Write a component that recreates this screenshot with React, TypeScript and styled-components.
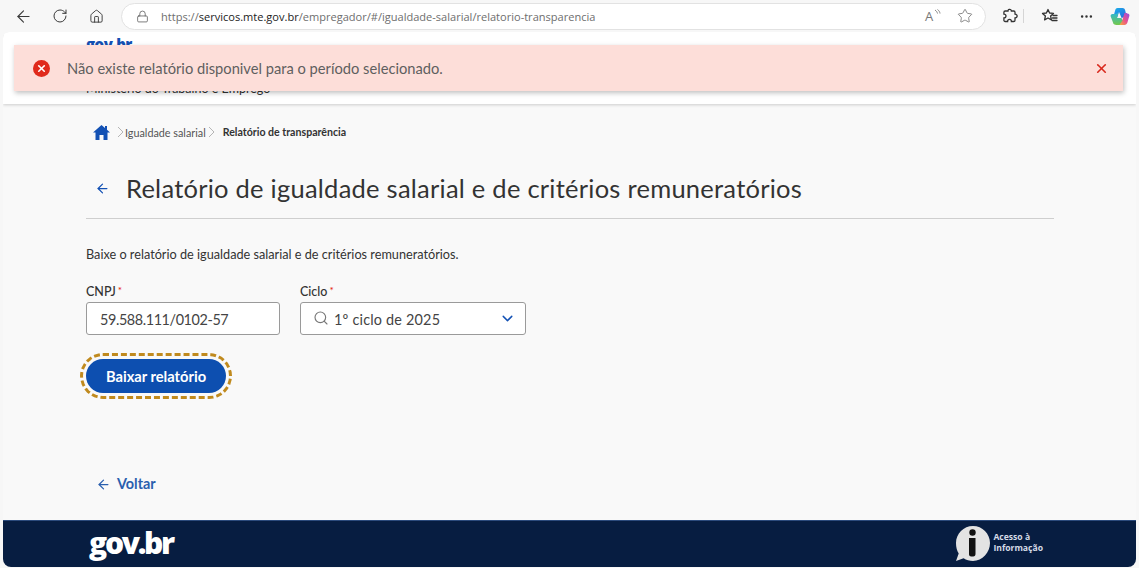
import React from "react";
import styled, { createGlobalStyle } from "styled-components";
import { ArrowLeft, RotateCw, House, Lock, Star, MoreHorizontal, Search, ChevronDown, X } from "lucide-react";

const Global = createGlobalStyle`
  html, body { margin: 0; padding: 0; width: 1139px; height: 568px; overflow: hidden; background: #f7f7f7; }
  * { box-sizing: border-box; }
  body { font-family: "Lato", "Liberation Sans", sans-serif; color: #333; }
`;

const Shell = styled.div`
  width: 1139px; height: 568px; display: flex; flex-direction: column; position: relative; overflow: hidden;
`;
const Toolbar = styled.div`
  height: 32px; flex: none; display: flex; align-items: center; padding: 0 0 0 14px; background: #f7f7f7;
`;
const NavBtn = styled.span<{ $w: number }>`
  width: ${p => p.$w}px; flex: none; display: flex; align-items: center; color: #3a3a3a;
`;
const Address = styled.div`
  width: 865px; height: 27px; margin-left: 1px; flex: none; display: flex; align-items: center; background: #fff;
  border: 1px solid #e2e2e2; border-radius: 14px; padding: 0 12px 0 14px; color: #555;
`;
const Url = styled.span`
  margin-left: 12px; font: 11.05px "Open Sans", sans-serif; color: #6e6e6e; flex: 1; white-space: nowrap;
  b { font-weight: 500; color: #222; }
`;
const AddrIcons = styled.span`
  display: flex; align-items: center; gap: 17px; color: #777;
`;
const ReadAloud = styled.span`
  position: relative; width: 15px; height: 15px; display: block; font: 13px/15px "Open Sans", sans-serif; color: #777;
  svg { position: absolute; right: -1px; top: 0; }
`;
const ToolIcons = styled.div`
  display: flex; align-items: center; margin-left: 16px; color: #333;
`;
const ToolSlot = styled.span<{ $w: number }>`
  width: ${p => p.$w}px; flex: none; display: flex; align-items: center;
`;
const Divider = styled.span`
  width: 1px; height: 14px; background: #d5d5d5; margin-right: 17px;
`;

const Page = styled.div`
  flex: 1; margin: 0 3px 1px; display: flex; flex-direction: column; background: #f9f9f9; min-height: 0;
  border-radius: 6px 6px 8px 8px; overflow: hidden;
`;
const Header = styled.header`
  height: 72px; flex: none; background: #fff; box-shadow: 0 1px 3px rgba(0,0,0,.18); padding: 6px 0 8px 83px;
  display: flex; flex-direction: column; justify-content: space-between;
`;
const HeaderLogo = styled.span`
  font: 800 15px "Open Sans", sans-serif; letter-spacing: -.5px; color: #1351b4; line-height: 12px;
`;
const HeaderOrg = styled.span`
  font: 12.5px "Lato", sans-serif; color: #333; line-height: 14px;
`;
const Toast = styled.div`
  position: absolute; left: 14px; top: 45px; width: 1109px; height: 46px; background: #fdded9;
  box-shadow: 1px 2px 5px rgba(0,0,0,.25); display: flex; align-items: center; padding: 0 14px 0 19px;
`;
const ToastIcon = styled.span`
  width: 17px; height: 17px; border-radius: 50%; background: #e02a1c; color: #fff; display: flex;
  align-items: center; justify-content: center; flex: none;
`;
const ToastText = styled.span`
  margin-left: 17px; font: 14.7px "Lato", sans-serif; color: #5f5f5f; flex: 1;
`;
const ToastClose = styled.span`
  color: #d9281c; display: flex;
`;

const Main = styled.main`
  flex: 1; padding: 21px 82px 0 83px; display: flex; flex-direction: column; min-height: 0;
`;
const Crumbs = styled.nav`
  display: flex; align-items: center; height: 14px; margin-left: 7px; font: 10.8px "Lato", sans-serif; color: #555;
`;
const Sep = styled.span<{ $ml: number }>`
  display: flex; color: #b5b5b5; margin: 0 1px 0 ${p => p.$ml}px;
`;
const Current = styled.span`
  font-weight: 700; color: #333; margin-left: 7px; font-size: 10.6px;
`;
const TitleRow = styled.div`
  margin-top: 27px; height: 44px; padding-left: 9px; display: flex; align-items: center; color: #1351b4;
`;
const Title = styled.h1`
  margin: 0 0 0 16px; font: 400 25.5px "Lato", sans-serif; letter-spacing: .25px; color: #333; white-space: nowrap;
`;
const Rule = styled.hr`
  margin: 8px 0 0; border: 0; height: 1px; background: #cfcfcf;
`;
const Lead = styled.p`
  margin: 27px 0 0; font: 12.7px/16px "Lato", sans-serif; color: #333;
`;
const Fields = styled.div`
  display: flex; gap: 20px; margin-top: 20px;
`;
const Field = styled.div<{ $w: number }>`
  width: ${p => p.$w}px; display: flex; flex-direction: column; gap: 2px;
`;
const Label = styled.label`
  font: 500 12.5px/16px "Lato", sans-serif; color: #333;
  i { color: #e52207; font-style: normal; font-size: 10px; vertical-align: 2px; margin-left: 2px; }
`;
const Box = styled.div`
  height: 33px; background: #fff; border: 1px solid #9a9a9a; border-radius: 3px; display: flex; align-items: center;
  font: 14.4px "Lato", sans-serif; color: #444; padding: 2px 9px 0 13px;
`;
const BoxText = styled.span<{ $ml?: number; $ls?: number }>`
  flex: 1; margin-left: ${p => p.$ml ?? 0}px; letter-spacing: ${p => p.$ls ?? 0.2}px; white-space: nowrap;
`;
const SearchSlot = styled.span`
  color: #777; display: flex; margin: -3px 0 0 -1px;
`;
const ChevSlot = styled.span`
  color: #1351b4; display: flex; margin-top: -3px;
`;
const ButtonWrap = styled.div`
  margin-top: 24px; align-self: flex-start;
`;
const Button = styled.button`
  display: block; width: 140px; height: 34px; border: 0; border-radius: 17px; background: #0d4fb0; color: #fff;
  font: 700 14.7px "Lato", sans-serif; outline: 3px dashed #c08a1e; outline-offset: 3px; padding: 0;
`;
const Back = styled.a`
  margin-top: 83px; margin-left: 10px; display: flex; align-items: center; gap: 6px; color: #2a5fae;
  font: 700 14.4px/16px "Lato", sans-serif; align-self: flex-start;
`;
const Footer = styled.footer`
  height: 47px; flex: none; background: #071d41; border-top: 1px solid #2b4a7c; display: flex; align-items: center;
  justify-content: space-between; padding: 0 93px 0 86px; color: #fff;
`;
const FooterLogo = styled.span`
  font: 800 30px/40px "Open Sans", sans-serif; letter-spacing: -2.3px; color: #fff; margin-top: -3px;
`;
const Info = styled.div`
  display: flex; align-items: center; gap: 1px;
`;
const InfoText = styled.span`
  font: 700 8.6px/11px "Open Sans", sans-serif; color: #d5dbe6; margin-bottom: 2px;
`;

const Extension = () => (
  <svg width="16" height="16" viewBox="0 0 16 16" fill="none" stroke="#333" strokeWidth="1.3">
    <path d="M6 2.600C6.300 1.400 7.900 1 8.800 1.800c.5.4.6.9.6 1.200h2.300c.8 0 1.300.5 1.300 1.300v1.900c1.500 0 2.300 1.100 2.100 2.200-.2 1-1.100 1.600-2.100 1.600v2.200c0 .8-.5 1.300-1.300 1.300H9.400c0-1.500-1-2.100-1.900-2.100S5.600 12 5.600 13.500H3.200c-.8 0-1.300-.5-1.300-1.300V10c1.300 0 2.100-.9 2.100-1.900S3.200 6.200 1.900 6.200V4.300C1.900 3.500 2.400 3 3.200 3H6Z" />
  </svg>
);
const Favs = () => (
  <svg width="17" height="16" viewBox="0 0 17 16" fill="none" stroke="#333" strokeWidth="1.3" strokeLinejoin="round">
    <path d="M7 1.500 8.600 5l3.900.4-2.900 2.600.8 3.900L7 10l-3.400 1.900.8-3.900L1.500 5.400 5.400 5Z" />
    <path d="M12 7.500h4M11.500 10h4.500M11 12.500h5" strokeLinecap="round" />
  </svg>
);
const Copilot = () => (
  <svg width="20" height="19" viewBox="0 0 20 19">
    <defs>
      <linearGradient id="cpA" x1="0" y1="0" x2="1" y2="1">
        <stop offset="0" stopColor="#19b4ea" />
        <stop offset="1" stopColor="#2b62de" />
      </linearGradient>
      <linearGradient id="cpB" x1="0" y1="1" x2="1" y2="0">
        <stop offset="0" stopColor="#f5b92c" />
        <stop offset=".5" stopColor="#ea4f8e" />
        <stop offset="1" stopColor="#8f4fe2" />
      </linearGradient>
      <linearGradient id="cpC" x1="0" y1="0" x2="0" y2="1">
        <stop offset="0" stopColor="#2bb5d8" />
        <stop offset="1" stopColor="#74c94a" />
      </linearGradient>
    </defs>
    <path d="M7.500 1h5c1.400 0 2.200.8 2.600 2l1.500 6.500-5 1.500L9 5 7 11H3l2.200-7.800C5.600 1.900 6.300 1 7.500 1Z" fill="url(#cpA)" />
    <path d="M17 6.500h.5c1.300 0 2.200 1 1.900 2.300l-2 6.700c-.5 1.600-1.400 2.500-3 2.500H8.500l4-5.500 2-6.500h2.500Z" fill="url(#cpB)" />
    <path d="M8.500 5.500 7 11h4.500l1 2.500L9.500 18h-3C4.500 18 3 17 3 15.500L.7 9.500C.3 8 1.200 7 2.500 7H6Z" fill="url(#cpC)" />
  </svg>
);
const InfoIcon = () => (
  <svg width="38" height="38" viewBox="0 0 38 38">
    <path d="M19 1C28.400 1 36 8.600 36 18s-7.600 18-17 18c-3.500 0-6.700-1-9.400-2.800L2 36l2.700-7.400C2.900 25.600 2 22 2 18 2 8.600 9.600 1 19 1Z" fill="#e3e3e3" />
    <circle cx="18.500" cy="7.500" r="3.200" fill="#111" />
    <path d="M15 13h6.500v15.500c0 1.500 0 3-3.300 3s-3.200-1.500-3.200-3Z" fill="#111" />
  </svg>
);
const Chevron = () => (
  <svg width="7" height="12" viewBox="0 0 7 12" fill="none" stroke="currentColor"><path d="m1 1 5 5-5 5" /></svg>
);

export default function App() {
  return (
    <Shell>
      <Global />
      <Toolbar>
        <NavBtn $w={38}><ArrowLeft size={19} strokeWidth={1.4} /></NavBtn>
        <NavBtn $w={37}><RotateCw size={16} strokeWidth={1.5} /></NavBtn>
        <NavBtn $w={31}><House size={15} strokeWidth={1.5} /></NavBtn>
        <Address>
          <Lock size={13} strokeWidth={1.4} />
          <Url>https://<b>servicos.mte.gov.br</b>/empregador/#/igualdade-salarial/relatorio-transparencia</Url>
          <AddrIcons>
            <ReadAloud>
              A
              <svg width="7" height="8" viewBox="0 0 7 8" fill="none" stroke="#777" strokeWidth="0.9">
                <path d="M1 1c1.500 1 2.200 2.200 2.500 3.500M3.500 0.500C5 1.500 5.800 3 6 4.500" />
              </svg>
            </ReadAloud>
            <Star size={16} strokeWidth={1.3} />
          </AddrIcons>
        </Address>
        <ToolIcons>
          <ToolSlot $w={21}><Extension /></ToolSlot>
          <Divider />
          <ToolSlot $w={38}><Favs /></ToolSlot>
          <ToolSlot $w={31}><MoreHorizontal size={15} strokeWidth={2} /></ToolSlot>
          <ToolSlot $w={20}><Copilot /></ToolSlot>
        </ToolIcons>
      </Toolbar>
      <Page>
        <Header>
          <HeaderLogo>gov.br</HeaderLogo>
          <HeaderOrg>Ministério do Trabalho e Emprego</HeaderOrg>
        </Header>
        <Main>
          <Crumbs>
            <svg width="17" height="15" viewBox="0 0 17 15" fill="#1351b4">
              <path d="M8.500 0 0 7.500h2.500V15h4v-5h4v5h4V7.500H17L14 4.800V1h-2v2.100Z" />
            </svg>
            <Sep $ml={7}><Chevron /></Sep>
            Igualdade salarial
            <Sep $ml={2}><Chevron /></Sep>
            <Current>Relatório de transparência</Current>
          </Crumbs>
          <TitleRow>
            <ArrowLeft size={15} strokeWidth={2} />
            <Title>Relatório de igualdade salarial e de critérios remuneratórios</Title>
          </TitleRow>
          <Rule />
          <Lead>Baixe o relatório de igualdade salarial e de critérios remuneratórios.</Lead>
          <Fields>
            <Field $w={194}>
              <Label>CNPJ<i>*</i></Label>
              <Box><BoxText $ls={-0.4}>59.588.111/0102-57</BoxText></Box>
            </Field>
            <Field $w={226}>
              <Label>Ciclo<i>*</i></Label>
              <Box>
                <SearchSlot><Search size={16} strokeWidth={1.7} /></SearchSlot>
                <BoxText $ml={5}>1º ciclo de 2025</BoxText>
                <ChevSlot><ChevronDown size={17} strokeWidth={2} /></ChevSlot>
              </Box>
            </Field>
          </Fields>
          <ButtonWrap><Button>Baixar relatório</Button></ButtonWrap>
          <Back><ArrowLeft size={15} strokeWidth={2} />Voltar</Back>
        </Main>
        <Footer>
          <FooterLogo>gov.br</FooterLogo>
          <Info>
            <InfoIcon />
            <InfoText>Acesso à<br />Informação</InfoText>
          </Info>
        </Footer>
      </Page>
      <Toast>
        <ToastIcon><X size={11} strokeWidth={3.5} /></ToastIcon>
        <ToastText>Não existe relatório disponivel para o período selecionado.</ToastText>
        <ToastClose><X size={15} strokeWidth={2.6} /></ToastClose>
      </Toast>
    </Shell>
  );
}
